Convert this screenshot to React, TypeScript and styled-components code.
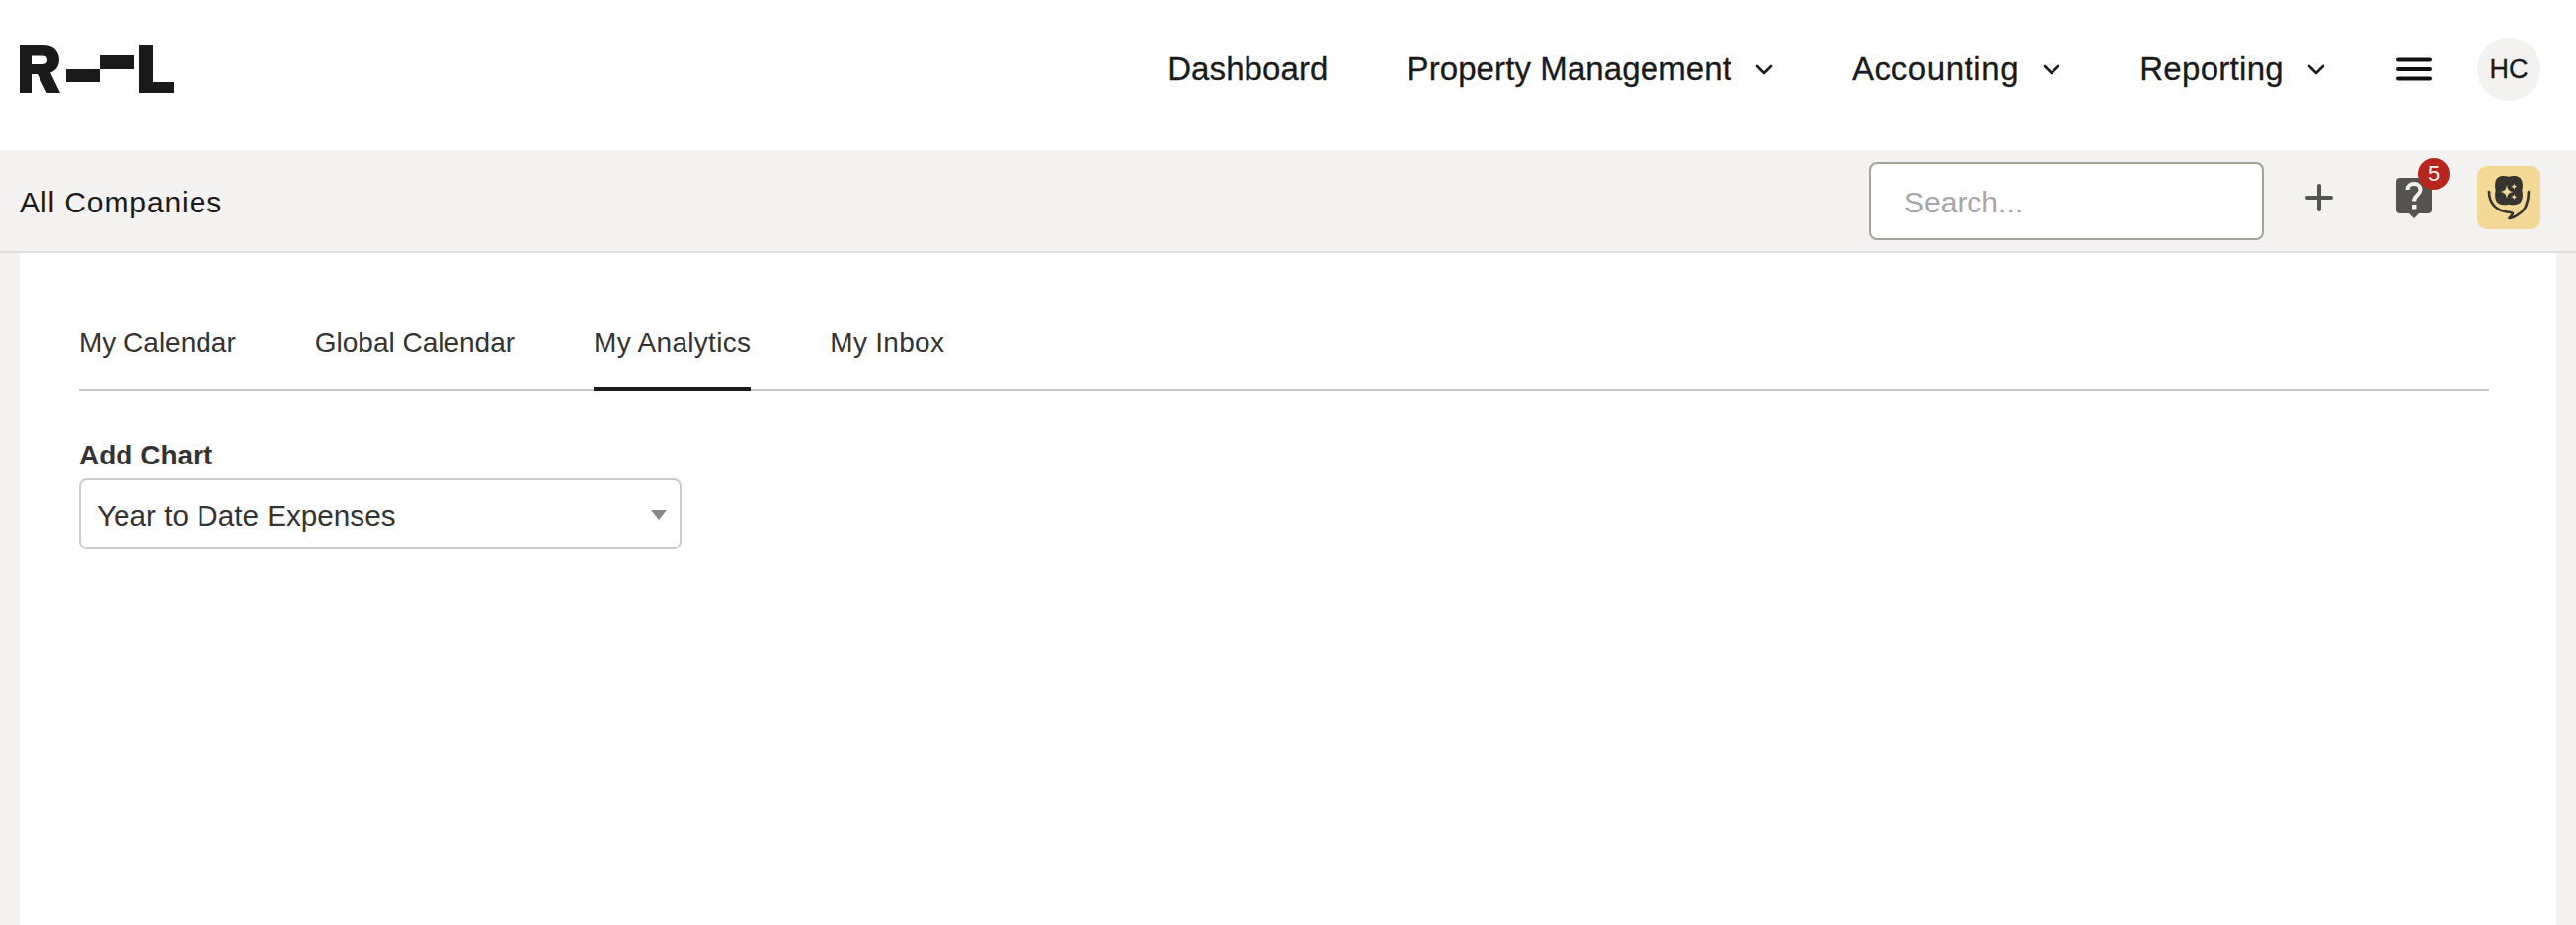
import React from "react";
import styled, { createGlobalStyle } from "styled-components";

const Global = createGlobalStyle`
  html, body { margin: 0; padding: 0; height: 100%; overflow: hidden; background: #f3f2f0; }
  * { box-sizing: border-box; }
  body { font-family: "Liberation Sans", Arial, sans-serif; color: #1a1a1a; }
`;

const Page = styled.div`
  width: 2608px;
  height: 936px;
  display: flex;
  flex-direction: column;
  background: #f3f2f0;
`;

const TopBar = styled.header`
  height: 152px;
  background: #fff;
  display: flex;
  align-items: center;
  justify-content: space-between;
  padding: 0 36px 12px 20px;
`;

const LogoMark = styled.svg`
  width: 156px;
  height: 48px;
  display: block;
  fill: #1a1a1a;
`;

const Nav = styled.nav`
  display: flex;
  align-items: center;
`;

const NavItem = styled.a<{ $spacing?: number }>`
  display: flex;
  align-items: center;
  gap: 24px;
  margin-right: 80px;
  font-size: 33px;
  line-height: 40px;
  letter-spacing: ${(p) => p.$spacing ?? 0.1}px;
  -webkit-text-stroke: 0.3px #1a1a1a;
  color: #1a1a1a;
`;

const Chevron = styled.svg`
  width: 18px;
  height: 11px;
  fill: none;
  stroke: #1a1a1a;
  stroke-width: 2.6;
  stroke-linecap: round;
  stroke-linejoin: round;
`;

const Burger = styled.svg`
  width: 36px;
  height: 24px;
  display: block;
  margin: 0 46px 0 -8px;
  stroke: #111;
  stroke-width: 4;
  stroke-linecap: round;
`;

const Avatar = styled.div`
  width: 64px;
  height: 64px;
  border-radius: 50%;
  background: #f3f2f0;
  display: flex;
  align-items: center;
  justify-content: center;
  font-size: 27px;
  -webkit-text-stroke: 0.3px #1a1a1a;
  color: #1a1a1a;
`;

const SubBar = styled.div`
  height: 104px;
  background: #f3f2f0;
  border-bottom: 2px solid #e0dfdb;
  display: flex;
  align-items: flex-start;
  justify-content: space-between;
  padding: 12px 36px 0 20px;
`;

const CompanyName = styled.div`
  margin-top: 24px;
  font-size: 30px;
  line-height: 34px;
  letter-spacing: 0.9px;
  color: #1a1a1a;
`;

const SubActions = styled.div`
  display: flex;
  align-items: flex-start;
`;

const SearchBox = styled.input`
  width: 400px;
  height: 79px;
  border: 2px solid #a5a299;
  border-radius: 8px;
  background: #fff;
  padding: 3px 34px 0;
  font: 30px "Liberation Sans", Arial, sans-serif;
  outline: none;
  &::placeholder { color: #a6a6a6; opacity: 1; }
`;

const PlusIcon = styled.svg`
  width: 28px;
  height: 28px;
  display: block;
  margin: 22px 64px 0 42px;
  stroke: #54534f;
  stroke-width: 4;
  stroke-linecap: round;
`;

const HelpWrap = styled.div`
  position: relative;
  width: 36px;
  height: 42px;
  margin: 16px 46px 0 0;
`;

const HelpIcon = styled.svg`
  width: 36px;
  height: 42px;
  display: block;
`;

const Badge = styled.span`
  position: absolute;
  top: -20px;
  left: 22px;
  width: 32px;
  height: 32px;
  border-radius: 50%;
  background: #b9251a;
  color: #fff;
  font-size: 22px;
  line-height: 32px;
  text-align: center;
`;

const AiButton = styled.div`
  width: 64px;
  height: 64px;
  margin-top: 4px;
  border-radius: 10px;
  background: #f3d995;
  display: flex;
  align-items: center;
  justify-content: center;
`;

const AiIcon = styled.svg`
  width: 64px;
  height: 64px;
  display: block;
`;

const Panel = styled.main`
  flex: 1;
  margin: 0 20px;
  background: #fff;
  padding: 60px 68px 0 60px;
`;

const Tabs = styled.div`
  display: flex;
  gap: 80px;
  height: 80px;
  border-bottom: 2px solid #c5c4be;
`;

const Tab = styled.div<{ $active?: boolean; $spacing?: number }>`
  height: 80px;
  padding-top: 15px;
  font-size: 28px;
  line-height: 32px;
  letter-spacing: ${(p) => p.$spacing ?? 0}px;
  color: #333;
  border-bottom: 4px solid ${(p) => (p.$active ? "#1a1a1a" : "transparent")};
`;

const FieldLabel = styled.label`
  display: block;
  margin-top: 49px;
  font-size: 28px;
  line-height: 32px;
  font-weight: 700;
  color: #333;
`;

const Select = styled.div`
  position: relative;
  width: 610px;
  height: 72px;
  margin-top: 7px;
  padding: 3px 16px 0;
  border: 2px solid #ccc;
  border-radius: 8px;
  display: flex;
  align-items: center;
  font-size: 29.7px;
  color: #333;
`;

const Caret = styled.span`
  position: absolute;
  right: 13px;
  top: 30px;
  width: 0;
  height: 0;
  border-left: 8px solid transparent;
  border-right: 8px solid transparent;
  border-top: 10px solid #888;
`;

const Down = () => (
  <Chevron viewBox="0 0 18 11">
    <path d="M2 2l7 7 7-7" />
  </Chevron>
);

export default function App() {
  return (
    <Page>
      <Global />
      <TopBar>
        <LogoMark viewBox="0 0 156 48" role="img" aria-label="R--L logo">
          <path
            fillRule="evenodd"
            d="M0 0H24C34 0 40 6 40 14.500C40 21 36.500 25.500 31 27.500L41 48H27.500L18 29H12V48H0ZM12 10.500V19H23C26.500 19 28 17.500 28 14.700C28 12 26.500 10.500 23 10.500Z"
          />
          <rect x="47" y="24" width="34" height="13" />
          <rect x="81" y="10" width="35" height="14" />
          <path d="M121 0H135V37H156V48H121Z" />
        </LogoMark>
        <Nav>
          <NavItem>Dashboard</NavItem>
          <NavItem>Property Management<Down /></NavItem>
          <NavItem $spacing={0.6}>Accounting<Down /></NavItem>
          <NavItem $spacing={0.3}>Reporting<Down /></NavItem>
          <Burger viewBox="0 0 36 24">
            <path d="M2 2.500H34M2 12H34M2 21.500H34" />
          </Burger>
          <Avatar>HC</Avatar>
        </Nav>
      </TopBar>
      <SubBar>
        <CompanyName>All Companies</CompanyName>
        <SubActions>
          <SearchBox placeholder="Search..." />
          <PlusIcon viewBox="0 0 28 28">
            <path d="M14 2V26M2 14H26" />
          </PlusIcon>
          <HelpWrap>
            <HelpIcon viewBox="0 0 36 42">
              <path
                fill="#54534f"
                d="M4 0H32A4 4 0 0 1 36 4V32A4 4 0 0 1 32 36H23L18 41L13 36H4A4 4 0 0 1 0 32V4A4 4 0 0 1 4 0Z"
              />
              <path
                fill="none"
                stroke="#f3f2f0"
                strokeWidth="4"
                d="M11.500 12C11.500 8 14.500 6 18 6C22 6 24.500 8.500 24.500 12C24.500 17 18 17.500 18 23.500"
              />
              <rect x="16" y="27" width="4.500" height="4.500" fill="#f3f2f0" />
            </HelpIcon>
            <Badge>5</Badge>
          </HelpWrap>
          <AiButton>
            <AiIcon viewBox="0 0 64 64">
              <path
                fill="#353431"
                d="M32 10.800C35.500 9.500 41 9.500 43.500 12C46 14.500 46.500 20 45.300 24.500C46.500 29 46 34.500 43.500 37C41 39.500 35.500 39.800 32 38.800C28.500 39.800 23 39.500 20.500 37C18 34.500 17.500 29 18.700 24.500C17.500 20 18 14.500 20.500 12C23 9.500 28.500 9.500 32 10.800Z"
              />
              <path
                fill="#f3d995"
                d="M30 19C30.800 24 32 25.200 37 26C32 26.800 30.800 28 30 33C29.200 28 28 26.800 23 26C28 25.200 29.200 24 30 19Z"
              />
              <path
                fill="#f3d995"
                d="M37.300 17.500C37.700 19.700 38.300 20.300 40.500 20.700C38.300 21.100 37.700 21.700 37.300 23.900C36.900 21.700 36.300 21.100 34.100 20.700C36.300 20.300 36.900 19.700 37.300 17.500Z"
              />
              <path
                fill="#f3d995"
                d="M37.300 28C37.700 30.200 38.300 30.800 40.500 31.200C38.300 31.600 37.700 32.200 37.300 34.400C36.900 32.200 36.300 31.600 34.100 31.200C36.300 30.800 36.900 30.200 37.300 28Z"
              />
              <path
                fill="none"
                stroke="#353431"
                strokeWidth="2.600"
                strokeLinecap="round"
                strokeLinejoin="round"
                d="M12 26C12 36 18 44 28 46C32 47 36 47 36 48C36 50 33 51.500 32.500 53C37 53 40 50 43 48C48 45 52 37 52 26"
              />
            </AiIcon>
          </AiButton>
        </SubActions>
      </SubBar>
      <Panel>
        <Tabs>
          <Tab>My Calendar</Tab>
          <Tab>Global Calendar</Tab>
          <Tab $active $spacing={0.3}>My Analytics</Tab>
          <Tab $spacing={0.3}>My Inbox</Tab>
        </Tabs>
        <FieldLabel>Add Chart</FieldLabel>
        <Select>
          Year to Date Expenses
          <Caret />
        </Select>
      </Panel>
    </Page>
  );
}
